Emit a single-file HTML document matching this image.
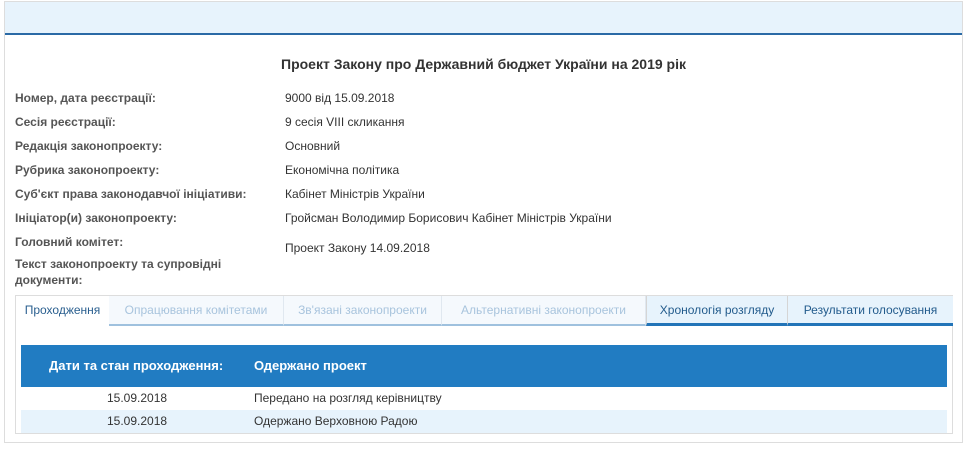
<!DOCTYPE html>
<html><head><meta charset="utf-8"><style>
body{margin:0;background:#fff;font-family:"Liberation Sans",Arial,sans-serif;font-size:12px;color:#333;}
.box{position:absolute;left:4px;top:1px;width:959px;height:442px;border:1px solid #ddd;box-sizing:border-box;}
.band{position:absolute;left:0;top:0;right:0;height:31px;background:#e7f3fc;border-bottom:2px solid #2a6aa6;}
.title{position:absolute;left:0;right:0;top:54px;text-align:center;font-weight:bold;font-size:14px;color:#333;}
.l{position:absolute;left:10px;font-weight:bold;color:#555;font-size:12px;}
.v{position:absolute;left:280px;color:#333;font-size:12px;}
.tabs{position:absolute;left:10px;top:293px;width:938px;height:139px;border:1px solid #ddd;box-sizing:border-box;}
.tab{position:absolute;top:0;height:30px;line-height:28px;text-align:center;box-sizing:border-box;font-size:12px;}
.dis{background:#f5f9fd;color:#a8c4dd;border-bottom:2px solid #9fc1de;border-right:1px solid #e0e8f0;}
.blu{background:#e7f3fc;color:#225b8c;border-bottom:3px solid #2274b8;border-left:1px solid #d5d5d5;}
.hdr{position:absolute;left:5px;top:49px;width:926px;height:42px;background:#217cc2;color:#fff;font-weight:bold;font-size:13px;}
.r{position:absolute;left:5px;width:926px;height:23px;line-height:23px;}
</style></head><body>
<div class="box">
<div class="band"></div>
<div class="title">Проект Закону про Державний бюджет України на 2019 рік</div>
<div class="l" style="top:89px">Номер, дата реєстрації:</div><div class="v" style="top:89px">9000 від 15.09.2018</div>
<div class="l" style="top:113px">Сесія реєстрації:</div><div class="v" style="top:113px">9 сесія VIII скликання</div>
<div class="l" style="top:137px">Редакція законопроекту:</div><div class="v" style="top:137px">Основний</div>
<div class="l" style="top:161px">Рубрика законопроекту:</div><div class="v" style="top:161px">Економічна політика</div>
<div class="l" style="top:185px">Суб'єкт права законодавчої ініціативи:</div><div class="v" style="top:185px">Кабінет Міністрів України</div>
<div class="l" style="top:209px">Ініціатор(и) законопроекту:</div><div class="v" style="top:209px">Гройсман Володимир Борисович Кабінет Міністрів України</div>
<div class="l" style="top:233px">Головний комітет:</div><div class="v" style="top:239px">Проект Закону 14.09.2018</div>
<div class="l" style="top:254px;line-height:16px">Текст законопроекту та супровідні<br>документи:</div>
<div class="tabs">
<div class="tab" style="left:0;width:93px;color:#2a5f8f;background:#fff;">Проходження</div>
<div class="tab dis" style="left:93px;width:175px;">Опрацювання комітетами</div>
<div class="tab dis" style="left:268px;width:158px;">Зв'язані законопроекти</div>
<div class="tab dis" style="left:426px;width:204px;">Альтернативні законопроекти</div>
<div class="tab blu" style="left:630px;width:141px;">Хронологія розгляду</div>
<div class="tab blu" style="left:771px;width:166px;">Результати голосування</div>
<div class="hdr"><span style="position:absolute;left:28px;top:13px">Дати та стан проходження:</span><span style="position:absolute;left:233px;top:13px">Одержано проект</span></div>
<div class="r" style="top:91px;background:#fff"><span style="position:absolute;left:86px">15.09.2018</span><span style="position:absolute;left:233px">Передано на розгляд керівництву</span></div>
<div class="r" style="top:114px;background:#e7f3fc;height:23px"><span style="position:absolute;left:86px">15.09.2018</span><span style="position:absolute;left:233px">Одержано Верховною Радою</span></div>
</div>
</div>
</body></html>
